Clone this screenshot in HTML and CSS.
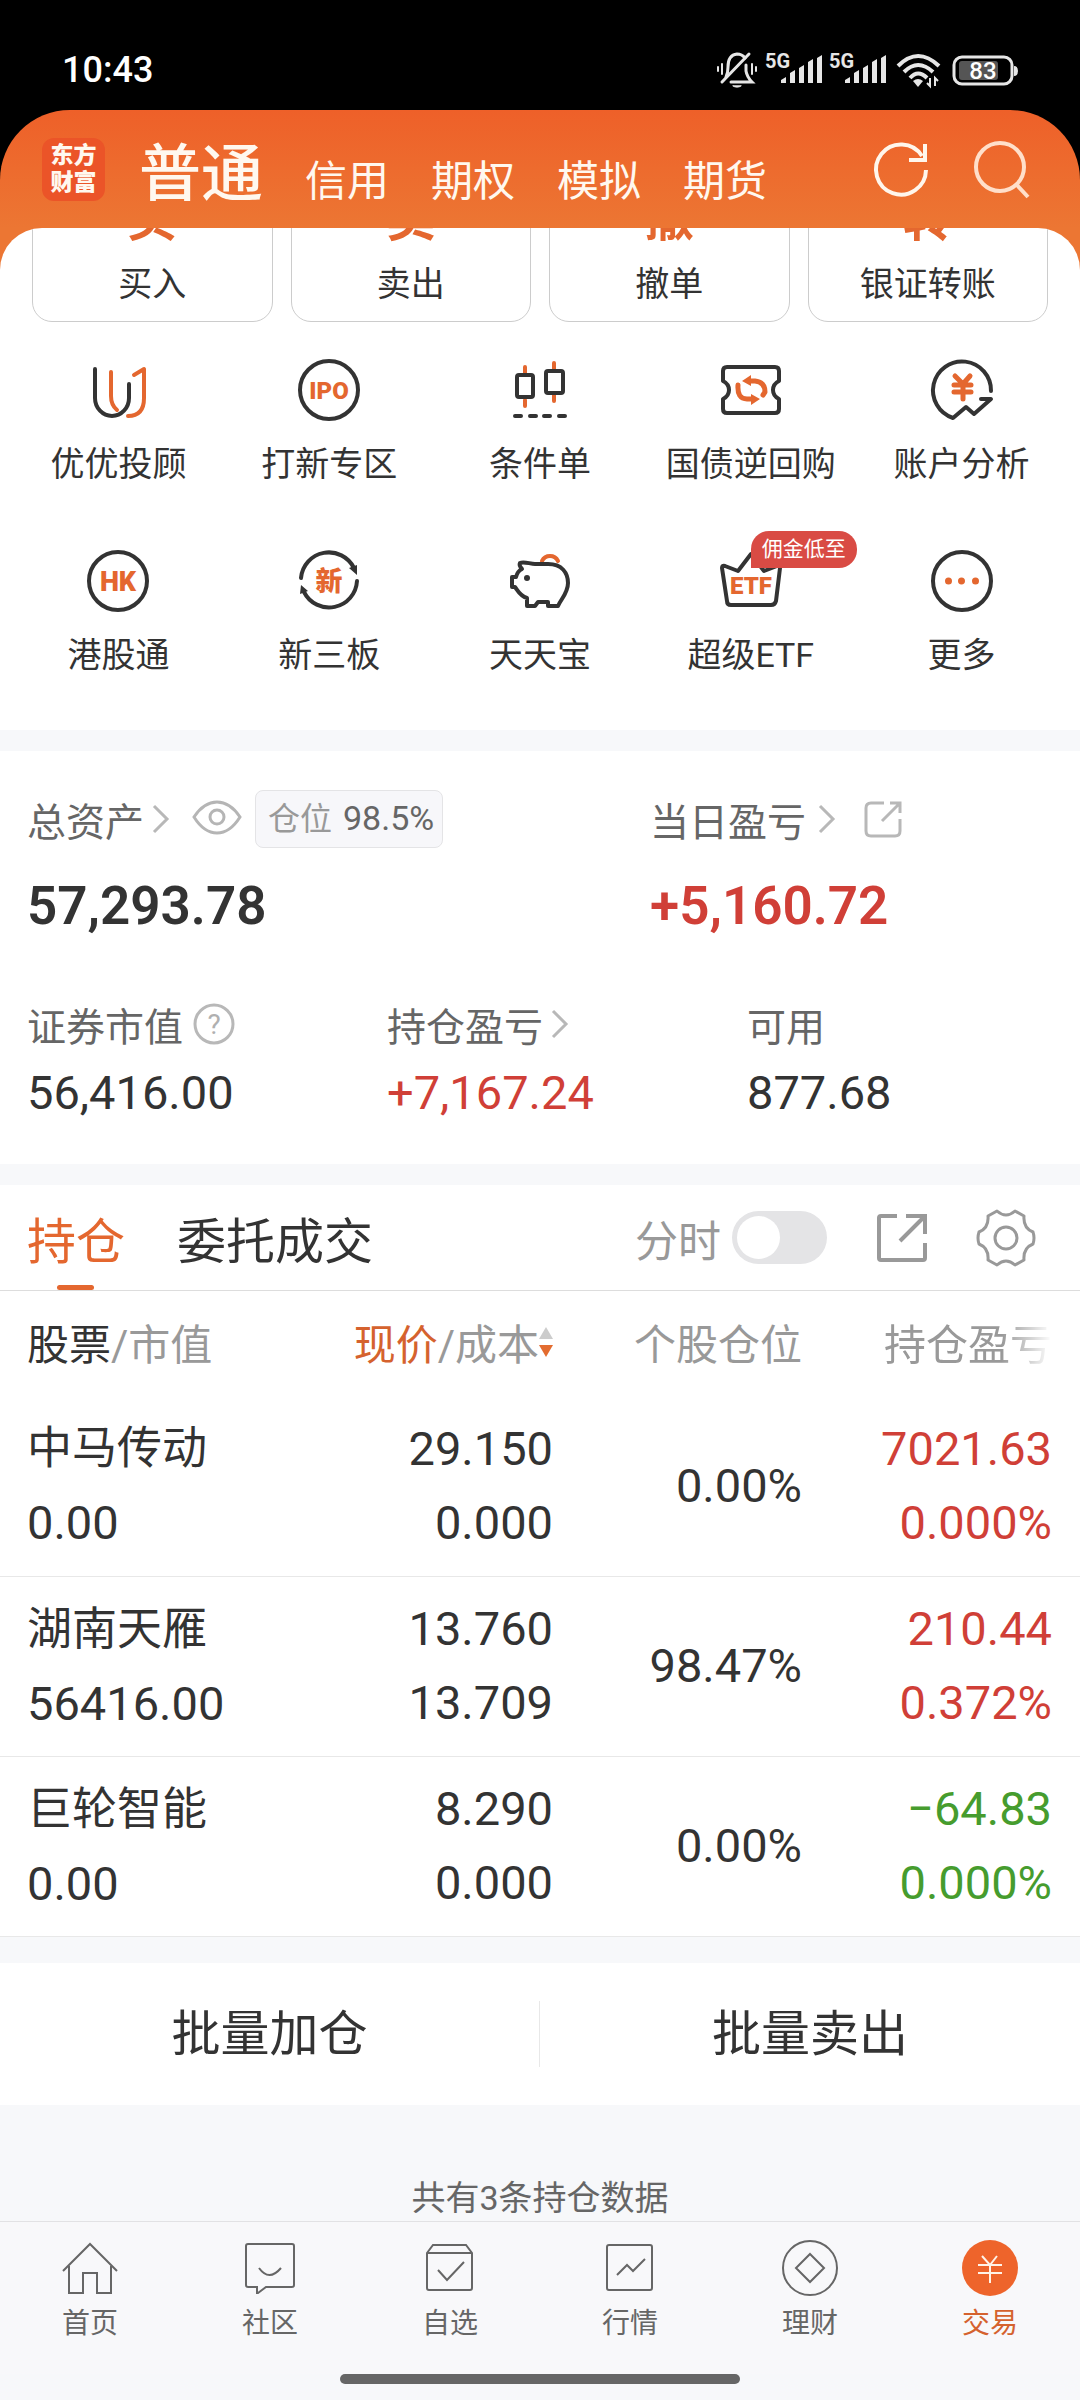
FILE: index.html
```html
<!DOCTYPE html>
<html lang="zh-CN">
<head>
  <meta charset="UTF-8" />
  <meta name="viewport" content="width=device-width, initial-scale=1.0" />
  <title>交易</title>
  <link rel="stylesheet" href="styles.css">
</head>
<body>
  <div class="top">
    <div class="status-bar">
      <span class="time">10:43</span>
      <div class="status-icons">
        <svg width="42" height="38" viewBox="0 0 42 38" fill="none" stroke="#e6e6e6" stroke-width="3" stroke-linecap="round">
          <path d="M2 16v4M6 13v10M36 13v10M40 16v4" stroke-width="2" />
          <path d="M10 26Q12 22 12 16Q12 4 21 3Q26 3 29 7M30 14V20Q31 26 36 31H15" />
          <path d="M6 31L33 3" />
          <path d="M17 35a5 3 0 0 0 8 0z" fill="#e6e6e6" stroke-width="1" />
        </svg>
        <svg width="57" height="38" viewBox="0 0 57 38" fill="#e6e6e6">
          <text x="0" y="17" class="net-label">5G</text>
          <path d="M16 32v-3l5-3v6zM25 32V22l5-3v13zM34 32V17l5-3v18zM43 32V11l5-3v24zM52 32V7l5-3v28z" />
        </svg>
        <svg width="57" height="38" viewBox="0 0 57 38" fill="#e6e6e6">
          <text x="0" y="17" class="net-label">5G</text>
          <path d="M16 32v-3l5-3v6zM25 32V22l5-3v13zM34 32V17l5-3v18zM43 32V11l5-3v24zM52 32V7l5-3v28z" />
        </svg>
        <svg width="50" height="38" viewBox="0 0 50 38" fill="none" stroke="#e6e6e6" stroke-width="4">
          <path d="M5 15Q25 -5 46 15M11 21Q25 7 40 21M17 27Q25 18 34 27" />
          <path d="M20 30Q25 26 30 30L25 36Z" fill="#e6e6e6" stroke="none" />
          <path d="M37 27v8l-3-3M42 35v-8l3 3" stroke-width="2" />
        </svg>
        <svg width="68" height="38" viewBox="0 0 68 38">
          <rect x="4" y="6" width="58" height="27" rx="8" fill="none" stroke="#e6e6e6" stroke-width="3" />
          <rect x="9" y="10" width="39" height="19" rx="3" fill="#555" />
          <path d="M64 15q4 0 4 5t-4 5z" fill="#e6e6e6" />
          <text x="33" y="28" class="battery-label">83</text>
        </svg>
      </div>
    </div>
    <header class="header">
      <a href="#" class="logo"><span>东方</span><span>财富</span></a>
      <nav class="accounts">
        <a href="#" class="account active">普通</a>
        <a href="#" class="account">信用</a>
        <a href="#" class="account">期权</a>
        <a href="#" class="account">模拟</a>
        <a href="#" class="account">期货</a>
      </nav>
      <div class="header-actions">
        <button aria-label="刷新">
          <svg width="60" height="60" viewBox="0 0 60 60" fill="none" stroke="#fff6ec" stroke-width="4">
            <path d="M55 31A25 25 0 1 1 51 17" />
            <path d="M54 5V21H38" />
          </svg>
        </button>
        <button aria-label="搜索">
          <svg width="60" height="60" viewBox="0 0 60 60" fill="none" stroke="#ffdfca" stroke-width="4">
            <circle cx="29" cy="28" r="24" />
            <path d="M45 45L57 58" />
          </svg>
        </button>
      </div>
    </header>
  </div>

  <div class="panel-wrap">
    <section class="panel">
      <div class="cards">
        <a href="#" class="card"><b>买</b><span>买入</span></a>
        <a href="#" class="card"><b>卖</b><span>卖出</span></a>
        <a href="#" class="card"><b>撤</b><span>撤单</span></a>
        <a href="#" class="card"><b>转</b><span>银证转账</span></a>
      </div>
      <div class="grid">
        <a href="#" class="item">
          <svg class="icon" viewBox="0 0 64 64">
            <path class="dark" d="M9 11V40a17 18 0 0 0 34 0V26" />
            <path class="hot" d="M25 14V38Q25 47 31 52M48 17L58 11V40Q58 58 42 58" />
          </svg>
          <span>优优投顾</span>
        </a>
        <a href="#" class="item">
          <svg class="icon" viewBox="0 0 64 64">
            <circle class="dark" cx="32" cy="32" r="29" />
            <text class="mark small" x="32" y="41">IPO</text>
          </svg>
          <span>打新专区</span>
        </a>
        <a href="#" class="item">
          <svg class="icon" viewBox="0 0 64 64">
            <path class="hot" d="M17 9v7M17 42v6M46 5v7M46 37v6" />
            <rect class="dark" x="9" y="17" width="16" height="22" rx="2" />
            <rect class="dark" x="38" y="13" width="17" height="22" rx="2" />
            <path class="dark" d="M7 58h6M22 58h6M36 58h6M51 58h6" />
          </svg>
          <span>条件单</span>
        </a>
        <a href="#" class="item">
          <svg class="icon" viewBox="0 0 64 64">
            <path class="dark" d="M8 9H56Q60 9 60 13V23Q54 26 54 32T60 41V51Q60 55 56 55H8Q4 55 4 51V41Q10 38 10 32T4 23V13Q4 9 8 9Z" />
            <path class="hot thick" d="M31 23H36Q46 24 46 34L44 37M19 27Q18 41 28 41H33" />
            <path fill="#e4672f" d="M23 23L32 17V28ZM41 41L32 36V47Z" />
          </svg>
          <span>国债逆回购</span>
        </a>
        <a href="#" class="item">
          <svg class="icon" viewBox="0 0 64 64">
            <path class="dark" d="M61 33A29 29 0 1 0 23 60L36 49L44 56L61 41H51" />
            <path class="hot thick" d="M25 18L33 26L40 18M33 26V41M24 27H41M24 34H41" />
          </svg>
          <span>账户分析</span>
        </a>
        <a href="#" class="item">
          <svg class="icon" viewBox="0 0 64 64">
            <circle class="dark" cx="32" cy="32" r="29" />
            <text class="mark" x="32" y="42">HK</text>
          </svg>
          <span>港股通</span>
        </a>
        <a href="#" class="item">
          <svg class="icon" viewBox="0 0 64 64">
            <path class="dark" d="M4 29A28 28 0 0 1 57 19M60 32A28 28 0 0 1 7 43" />
            <path fill="#333" d="M52 19L60 16V26ZM4 36L11 42L3 45Z" />
            <text class="mark" x="32" y="42">新</text>
          </svg>
          <span>新三板</span>
        </a>
        <a href="#" class="item">
          <svg class="icon" viewBox="0 0 64 64">
            <path class="hot" d="M34 12A9 9 0 0 1 50 12" />
            <path class="dark" d="M12 14C16 12 22 15 27 15H40C54 15 60 24 60 34C60 44 53 50 50 57H40V53H30L27 57H19V49C12 47 10 42 7 38H4V28H8C9 24 12 21 14 20C12 18 11 16 12 14Z" />
            <circle cx="19" cy="29" r="3" fill="#333" />
          </svg>
          <span>天天宝</span>
        </a>
        <a href="#" class="item">
          <svg class="icon" viewBox="0 0 64 64">
            <path class="dark" d="M6 17L19 22L32 5L45 22L58 17Q61 16 61 19L57 52Q56 56 52 56H12Q8 56 8 52L3 19Q3 16 6 17Z" />
            <text class="mark small" x="32" y="45">ETF</text>
          </svg>
          <em class="badge">佣金低至</em>
          <span>超级ETF</span>
        </a>
        <a href="#" class="item">
          <svg class="icon" viewBox="0 0 64 64">
            <circle class="dark" cx="32" cy="32" r="29" />
            <path fill="#e4672f" d="M15 32a3 3 0 0 1 7 0a3 3 0 0 1 -7 0M28 32a3 3 0 0 1 7 0a3 3 0 0 1 -7 0M42 32a3 3 0 0 1 7 0a3 3 0 0 1 -7 0" />
          </svg>
          <span>更多</span>
        </a>
      </div>
    </section>
  </div>

  <section class="assets">
    <div class="assets-main">
      <div class="asset">
        <div class="asset-label">
          <a href="#">总资产</a>
          <svg class="chevron" viewBox="0 0 18 30"><path d="M2 2L15 15L2 28" /></svg>
          <button class="eye" aria-label="隐藏金额">
            <svg width="50" height="36" viewBox="0 0 50 36" fill="none" stroke="#b5b5b5" stroke-width="3">
              <path d="M2 16Q12 1 25 1T48 16Q38 32 25 32T2 16Z" />
              <circle cx="25" cy="16" r="7" />
            </svg>
          </button>
          <span class="chip">仓位 <b>98.5%</b></span>
        </div>
        <div class="asset-total">57,293.78</div>
      </div>
      <div class="asset">
        <div class="asset-label">
          <a href="#">当日盈亏</a>
          <svg class="chevron wide" viewBox="0 0 18 30"><path d="M2 2L15 15L2 28" /></svg>
          <button class="share" aria-label="分享当日盈亏">
            <svg width="38" height="38" viewBox="0 0 38 38" fill="none" stroke="#b8b8b8" stroke-width="3">
              <path d="M20 3H7Q2 3 2 8V31Q2 36 7 36H31Q36 36 36 31V19M26 3H36V13M36 3L18 21" />
            </svg>
          </button>
        </div>
        <div class="asset-total red">+5,160.72</div>
      </div>
    </div>
    <div class="assets-sub">
      <div class="asset">
        <div class="asset-label">
          证券市值
          <button class="help" aria-label="说明">
            <svg width="42" height="42" viewBox="0 0 42 42">
              <circle cx="21" cy="21" r="19" fill="none" stroke="#b8b8b8" stroke-width="3" />
              <text x="21" y="31" class="help-mark">?</text>
            </svg>
          </button>
        </div>
        <div class="asset-value">56,416.00</div>
      </div>
      <div class="asset">
        <div class="asset-label">
          <a href="#">持仓盈亏</a>
          <svg class="chevron" viewBox="0 0 18 30"><path d="M2 2L15 15L2 28" /></svg>
        </div>
        <div class="asset-value red">+7,167.24</div>
      </div>
      <div class="asset">
        <div class="asset-label">可用</div>
        <div class="asset-value">877.68</div>
      </div>
    </div>
  </section>

  <section class="holdings">
    <div class="tabs">
      <button class="tab active">持仓</button>
      <button class="tab">委托成交</button>
      <div class="tools">
        <label for="minute">分时</label>
        <input type="checkbox" id="minute" class="switch">
        <button aria-label="分享持仓">
          <svg width="50" height="50" viewBox="0 0 50 50" fill="none" stroke="#999" stroke-width="4">
            <path d="M20 3H4Q2 3 2 5V45Q2 47 4 47H46Q48 47 48 45V30M29 3H48V21M47 4L23 28" />
          </svg>
        </button>
        <button aria-label="设置">
          <svg width="58" height="58" viewBox="0 0 58 58" fill="none" stroke="#999" stroke-width="3">
            <path d="M20 2Q29 10 38 2L47 7Q46 19 56 23Q58 29 56 35Q46 39 47 51L38 56Q29 48 20 56L11 51Q12 39 2 35Q0 29 2 23Q12 19 11 7Z" stroke-linejoin="round" />
            <circle cx="29" cy="29" r="11" />
          </svg>
        </button>
      </div>
    </div>
    <table class="stocks">
      <thead>
        <tr>
          <th><span class="dark-text">股票</span>/市值</th>
          <th>
            <span class="sort"><span><span class="orange">现价</span>/成本</span>
              <svg width="14" height="34" viewBox="0 0 14 34"><path d="M7 2L14 14H0Z" fill="#ccc" /><path d="M0 20H14L7 32Z" fill="#e36c30" /></svg>
            </span>
          </th>
          <th>个股仓位</th>
          <th><span class="fade">持仓盈亏</span></th>
        </tr>
      </thead>
      <tbody>
        <tr>
          <td><span class="name">中马传动</span><br>0.00</td>
          <td>29.150<br>0.000</td>
          <td>0.00%</td>
          <td class="red">7021.63<br>0.000%</td>
        </tr>
        <tr>
          <td><span class="name">湖南天雁</span><br>56416.00</td>
          <td>13.760<br>13.709</td>
          <td>98.47%</td>
          <td class="red">210.44<br>0.372%</td>
        </tr>
        <tr>
          <td><span class="name">巨轮智能</span><br>0.00</td>
          <td>8.290<br>0.000</td>
          <td>0.00%</td>
          <td class="green">−64.83<br>0.000%</td>
        </tr>
      </tbody>
    </table>
  </section>

  <div class="batch">
    <button>批量加仓</button>
    <button>批量卖出</button>
  </div>

  <p class="tip">共有3条持仓数据</p>

  <nav class="tabbar">
    <a href="#">
      <svg width="58" height="58" viewBox="0 0 58 58"><path d="M2 31L29 4L56 31M8 26V53H22V33H36V53H50V26" /></svg>
      <span>首页</span>
    </a>
    <a href="#">
      <svg width="58" height="58" viewBox="0 0 58 58"><path d="M7 4H51Q53 4 53 6V45Q53 47 51 47H25L17 53H16V47H7Q5 47 5 45V6Q5 4 7 4ZM18 28Q28 42 40 28" /></svg>
      <span>社区</span>
    </a>
    <a href="#">
      <svg width="58" height="58" viewBox="0 0 58 58"><path d="M12 5H45L51 13V48Q51 50 49 50H8Q6 50 6 48V13ZM6 13H51M17 30L26 40L43 22" /></svg>
      <span>自选</span>
    </a>
    <a href="#">
      <svg width="58" height="58" viewBox="0 0 58 58"><path d="M8 5H49Q51 5 51 7V48Q51 50 49 50H8Q6 50 6 48V7Q6 5 8 5ZM16 35L26 25L32 31L44 19" /></svg>
      <span>行情</span>
    </a>
    <a href="#">
      <svg width="58" height="58" viewBox="0 0 58 58"><circle cx="29" cy="28" r="27" /><path d="M29 14L43 28L29 42L15 28Z" /></svg>
      <span>理财</span>
    </a>
    <a href="#" class="active">
      <svg width="58" height="58" viewBox="0 0 58 58"><circle cx="29" cy="28" r="28" fill="#ee642b" stroke="none" /><path d="M21 16L29 25L36 16M29 25V43M17 25H41M17 33H41" stroke="#fff3e8" /></svg>
      <span>交易</span>
    </a>
  </nav>
  <div class="home-bar"></div>
</body>
</html>
```
FILE: styles.css
```css
* {
  box-sizing: border-box;
}

body {
  margin: 0;
  min-height: 100vh;
  display: flex;
  flex-direction: column;
  font-family: Roboto, "Noto Sans CJK SC", sans-serif;
  font-size: 34px;
  color: #333;
  background-color: #f7f8fa;
}

a {
  color: inherit;
  text-decoration: none;
}

button {
  font: inherit;
  color: inherit;
  background: none;
  border: none;
  padding: 0;
  cursor: pointer;
}

svg {
  display: block;
  flex-shrink: 0;
  overflow: visible;
}

.red {
  color: #d03f37;
}

.green {
  color: #469c2e;
}

/* status bar and header */
.top {
  background-color: #000;
}

.status-bar {
  height: 110px;
  padding: 30px 62px 0 62px;
  display: flex;
  align-items: center;
  justify-content: space-between;
  color: #fff;
}

.time {
  font-size: 36px;
  font-weight: 500;
}

.status-icons {
  display: flex;
  gap: 7px;
}

.net-label {
  font-size: 20px;
  font-weight: 700;
}

.battery-label {
  font-size: 24px;
  font-weight: 500;
  fill: #fff;
  text-anchor: middle;
}

.header {
  height: 118px;
  padding: 0 49px 0 42px;
  display: flex;
  align-items: center;
  color: #fff8ef;
  background: linear-gradient(#ee6029, #ec7633);
  border-radius: 70px 70px 0 0;
}

.logo {
  width: 63px;
  height: 63px;
  display: flex;
  flex-direction: column;
  align-items: center;
  justify-content: center;
  font-size: 23px;
  font-weight: 900;
  line-height: 27px;
  border-radius: 12px;
  background-color: #eb5428;
}

.accounts {
  flex: 1;
  margin-left: 34px;
  padding-top: 18px;
  display: flex;
  align-items: baseline;
  gap: 42px;
}

.account {
  font-size: 42px;
  line-height: 80px;
}

.account.active {
  font-size: 62px;
  font-weight: 500;
}

.header-actions {
  display: flex;
  gap: 40px;
}

/* trade entries */
.panel-wrap {
  background-color: #ec7633;
}

.panel {
  overflow: hidden;
  padding: 0 13px 55px;
  background-color: #fff;
  border-radius: 42px 42px 0 0;
}

.cards {
  margin: -42px 19px 36px;
  display: grid;
  grid-template-columns: repeat(4, 1fr);
  gap: 18px;
}

.card {
  padding-bottom: 17px;
  display: flex;
  flex-direction: column;
  align-items: center;
  line-height: 40px;
  border: 1px solid #ccc;
  border-radius: 20px;
}

.card b {
  margin-bottom: 13px;
  font-size: 50px;
  line-height: 64px;
  color: #e4672f;
}

.grid {
  display: grid;
  grid-template-columns: repeat(5, 1fr);
  row-gap: 65px;
}

.item {
  position: relative;
  display: flex;
  flex-direction: column;
  align-items: center;
  gap: 22px;
  line-height: 40px;
  white-space: nowrap;
}

.icon {
  width: 64px;
  height: 64px;
}

.dark,
.hot {
  fill: none;
  stroke: #333;
  stroke-width: 4;
  stroke-linecap: round;
  stroke-linejoin: round;
}

.hot {
  stroke: #e4672f;
}

.hot.thick {
  stroke-width: 5;
}

.mark {
  font-size: 27px;
  font-weight: 900;
  fill: #e4672f;
  text-anchor: middle;
}

.mark.small {
  font-size: 24px;
}

.badge {
  position: absolute;
  left: 50%;
  top: -18px;
  padding: 0 11px;
  font-size: 21px;
  font-style: normal;
  line-height: 37px;
  color: #fff;
  background-color: #d94b44;
  border-radius: 18px 18px 18px 0;
}

/* assets */
.assets {
  margin-top: 21px;
  padding: 39px 0 41px;
  background-color: #fff;
}

.assets-main {
  display: grid;
  grid-template-columns: 15fr 11fr;
}

.assets-sub {
  margin-top: 65px;
  display: grid;
  grid-template-columns: repeat(3, 1fr);
}

.asset {
  padding-left: 27px;
}

.asset-label {
  display: flex;
  align-items: center;
  height: 46px;
  font-size: 39px;
  color: #666;
}

.assets-main .asset-label {
  height: 57px;
}

.chevron {
  width: 18px;
  height: 30px;
  margin-left: 8px;
  fill: none;
  stroke: #b8b8b8;
  stroke-width: 3;
}

.chevron.wide {
  margin-left: 12px;
}

.eye {
  margin: 0 13px 0 22px;
}

.share {
  margin-left: 28px;
}

.help {
  margin-left: 10px;
}

.help-mark {
  font-size: 28px;
  fill: #b0b0b0;
  text-anchor: middle;
}

.chip {
  padding: 0 8px 0 12px;
  font-size: 32px;
  line-height: 55px;
  color: #999;
  background-color: #f7f7fa;
  border: 1px solid #e4e4e6;
  border-radius: 8px;
}

.chip b {
  margin-left: 3px;
  font-size: 34px;
  font-weight: 400;
  color: #666;
}

.asset-total {
  margin-top: 29px;
  font-size: 53px;
  font-weight: 600;
  line-height: 60px;
}

.asset-value {
  margin-top: 16px;
  font-size: 47px;
  line-height: 60px;
}

/* holdings */
.holdings {
  margin-top: 21px;
  background-color: #fff;
}

.tabs {
  height: 106px;
  padding: 0 45px 0 27px;
  display: flex;
  gap: 52px;
  border-bottom: 1px solid #ddd;
}

.tab {
  position: relative;
  font-size: 49px;
}

.tab.active {
  color: #e4672f;
}

.tab.active::after {
  content: "";
  position: absolute;
  left: 50%;
  bottom: 0;
  width: 37px;
  height: 5px;
  margin-left: -19px;
  border-radius: 3px;
  background-color: #e4672f;
}

.tools {
  margin-left: auto;
  display: flex;
  align-items: center;
  font-size: 43px;
  color: #999;
}

.tools button {
  margin-left: 50px;
}

.switch {
  appearance: none;
  width: 95px;
  height: 53px;
  margin: 0 0 0 11px;
  padding: 5px;
  border-radius: 27px;
  background-color: #e4e4e6;
}

.switch::before {
  content: "";
  display: block;
  width: 43px;
  height: 43px;
  border-radius: 50%;
  background-color: #fff;
}

.switch:checked {
  background-color: #e4672f;
}

.switch:checked::before {
  margin-left: auto;
}

.stocks {
  width: 100%;
  table-layout: fixed;
  border-collapse: collapse;
}

.stocks th,
.stocks td {
  padding: 0;
  text-align: right;
  white-space: nowrap;
}

.stocks th {
  width: 249px;
  height: 105px;
  padding-bottom: 4px;
  font-size: 42px;
  font-weight: 400;
  color: #999;
}

.stocks th:first-child {
  width: auto;
}

.stocks th:last-child {
  width: 278px;
}

.stocks td {
  height: 180px;
  font-size: 47px;
  line-height: 74px;
  border-bottom: 1px solid #e8e8e8;
}

.stocks th:first-child,
.stocks td:first-child {
  padding-left: 27px;
  text-align: left;
}

.stocks th:last-child,
.stocks td:last-child {
  padding-right: 28px;
}

.name {
  font-size: 45px;
}

.dark-text {
  color: #333;
}

.orange {
  color: #d5622e;
}

.sort {
  display: flex;
  align-items: center;
  justify-content: flex-end;
}

.fade {
  -webkit-mask-image: linear-gradient(to right, #000 70%, transparent);
  mask-image: linear-gradient(to right, #000 70%, transparent);
}

.batch {
  margin-top: 26px;
  padding: 38px 0;
  display: grid;
  grid-template-columns: 1fr 1fr;
  background-color: #fff;
}

.batch button {
  padding-top: 2px;
  font-size: 49px;
  line-height: 64px;
}

.batch button:first-child {
  border-right: 1px solid #e8e8e8;
}

.tip {
  margin: 0;
  padding-top: 71px;
  line-height: 45px;
  text-align: center;
  color: #666;
}

/* bottom navigation */
.tabbar {
  padding: 18px 0 32px;
  display: grid;
  grid-template-columns: repeat(6, 1fr);
  font-size: 28px;
  line-height: 36px;
  color: #666;
  background-color: #f8f8fa;
  border-top: 1px solid #e2e2e4;
}

.tabbar a {
  display: flex;
  flex-direction: column;
  align-items: center;
  gap: 8px;
}

.tabbar svg {
  fill: none;
  stroke: #666;
  stroke-width: 2;
}

.tabbar .active {
  color: #d5622e;
}

.home-bar {
  width: 37%;
  height: 10px;
  margin: 0 auto 16px;
  border-radius: 5px;
  background-color: #666;
}
```
